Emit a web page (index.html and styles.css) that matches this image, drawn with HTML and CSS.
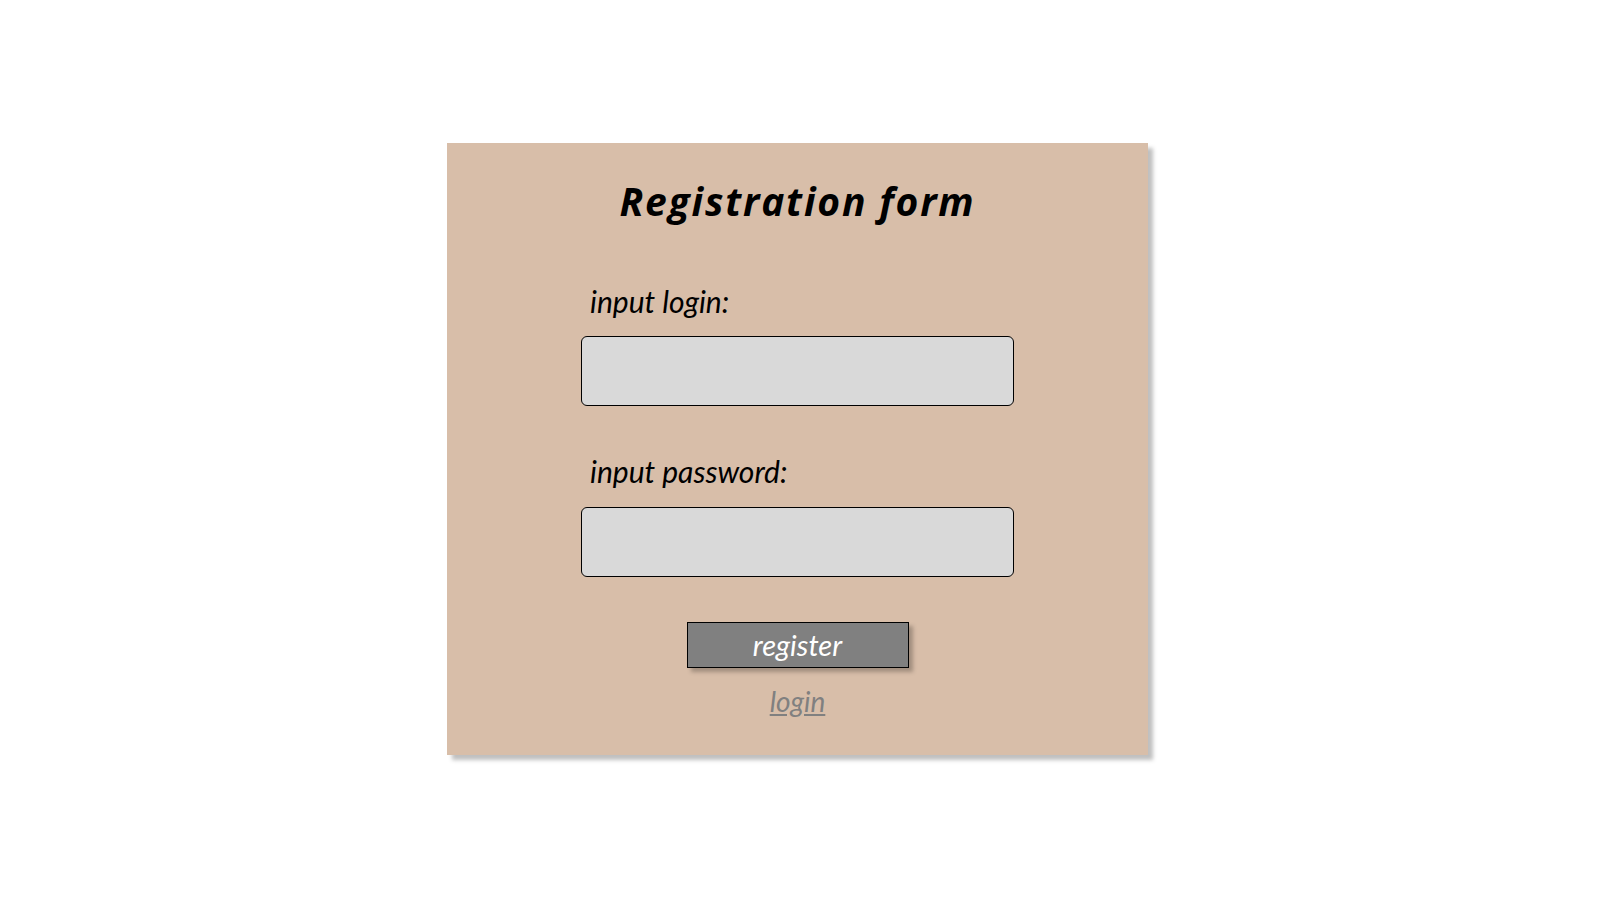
FILE: index.html
```html
<!DOCTYPE html>
<html lang="en">
<head>
<meta charset="utf-8">
<title>Registration form</title>
<link rel="stylesheet" href="styles.css">
</head>
<body>
<main class="page">
  <form class="card">
    <h1 class="title">Registration form</h1>
    <div class="fields">
      <label class="label" for="login">input login:</label>
      <input class="field" id="login" type="text">
      <label class="label label-second" for="password">input password:</label>
      <input class="field" id="password" type="password">
    </div>
    <button class="btn" type="button">register</button>
    <a class="link" href="#">login</a>
  </form>
</main>
</body>
</html>
```
FILE: styles.css
```css
* { box-sizing: border-box; }
html, body { margin: 0; padding: 0; background: #ffffff; }
body { font-family: "Lato", "Liberation Sans", sans-serif; }
.page {
  height: 898px;
  display: flex;
  align-items: center;
  justify-content: center;
  padding-right: 3px;
}
.card {
  width: 701px;
  height: 612px;
  background: #d8bea9;
  box-shadow: 5px 5px 4px rgba(0,0,0,0.25);
  display: flex;
  flex-direction: column;
  align-items: center;
  padding-top: 34px;
}
.title {
  margin: 0;
  font-family: "Open Sans", "Lato", sans-serif;
  font-size: 39px;
  line-height: 48px;
  font-weight: 700;
  font-style: italic;
  letter-spacing: 1.8px;
  color: #000;
}
.fields {
  width: 433px;
  display: flex;
  flex-direction: column;
  margin-top: 58px;
}
.label {
  font-size: 30px;
  line-height: 36px;
  font-style: italic;
  color: #000;
  padding-left: 9px;
  margin-bottom: 17px;
}
.label-second { margin-top: 47px; margin-bottom: 18px; }
.field {
  width: 433px;
  height: 70px;
  background: #d9d9d9;
  border: 1px solid #000;
  border-radius: 6px;
  margin: 0;
  font: inherit;
}
.btn {
  margin-top: 45px;
  width: 222px;
  height: 46px;
  background: #808080;
  border: 1px solid #000;
  box-shadow: 4px 4px 4px rgba(0,0,0,0.25);
  color: #fff;
  font-family: inherit;
  font-size: 29px;
  line-height: 44px;
  font-style: italic;
  padding: 0;
}
.link {
  margin-top: 16px;
  font-size: 28px;
  line-height: 34px;
  font-style: italic;
  color: #808080;
  text-decoration: underline;
}
```
